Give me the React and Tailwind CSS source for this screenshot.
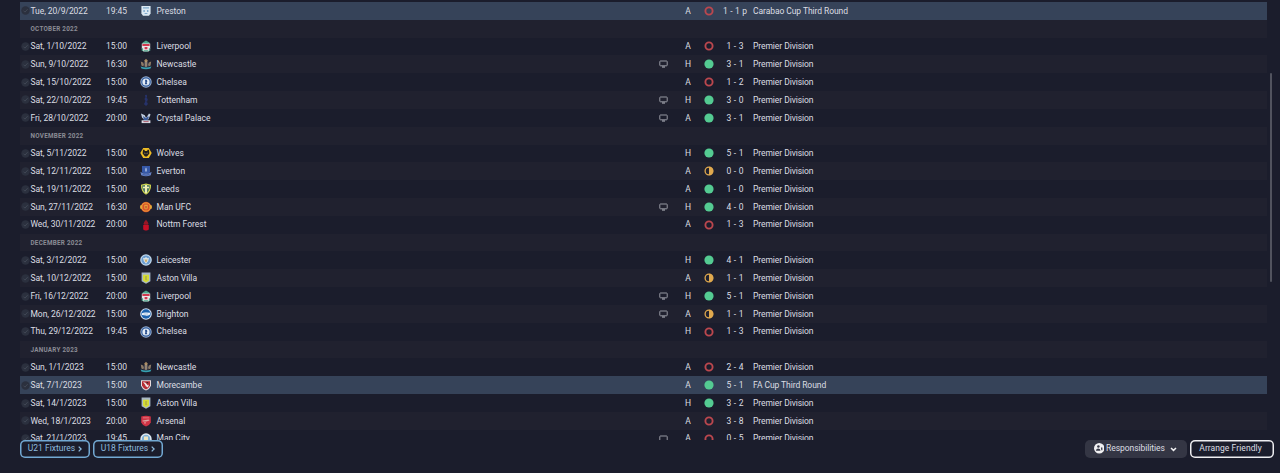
import React from "react";
import clsx from "clsx";

const ROWS = [
  { date: "Tue, 20/9/2022", time: "19:45", team: "Preston", venue: "A", result: "L", score: "1 - 1 p", comp: "Carabao Cup Third Round", cup: true },
  { month: "OCTOBER 2022" },
  { date: "Sat, 1/10/2022", time: "15:00", team: "Liverpool", venue: "A", result: "L", score: "1 - 3" },
  { date: "Sun, 9/10/2022", time: "16:30", team: "Newcastle", tv: true, venue: "H", result: "W", score: "3 - 1" },
  { date: "Sat, 15/10/2022", time: "15:00", team: "Chelsea", venue: "A", result: "L", score: "1 - 2" },
  { date: "Sat, 22/10/2022", time: "19:45", team: "Tottenham", tv: true, venue: "H", result: "W", score: "3 - 0" },
  { date: "Fri, 28/10/2022", time: "20:00", team: "Crystal Palace", tv: true, venue: "A", result: "W", score: "3 - 1" },
  { month: "NOVEMBER 2022" },
  { date: "Sat, 5/11/2022", time: "15:00", team: "Wolves", venue: "H", result: "W", score: "5 - 1" },
  { date: "Sat, 12/11/2022", time: "15:00", team: "Everton", venue: "A", result: "D", score: "0 - 0" },
  { date: "Sat, 19/11/2022", time: "15:00", team: "Leeds", venue: "A", result: "W", score: "1 - 0" },
  { date: "Sun, 27/11/2022", time: "16:30", team: "Man UFC", tv: true, venue: "H", result: "W", score: "4 - 0" },
  { date: "Wed, 30/11/2022", time: "20:00", team: "Nottm Forest", venue: "A", result: "L", score: "1 - 3" },
  { month: "DECEMBER 2022" },
  { date: "Sat, 3/12/2022", time: "15:00", team: "Leicester", venue: "H", result: "W", score: "4 - 1" },
  { date: "Sat, 10/12/2022", time: "15:00", team: "Aston Villa", venue: "A", result: "D", score: "1 - 1" },
  { date: "Fri, 16/12/2022", time: "20:00", team: "Liverpool", tv: true, venue: "H", result: "W", score: "5 - 1" },
  { date: "Mon, 26/12/2022", time: "15:00", team: "Brighton", tv: true, venue: "A", result: "D", score: "1 - 1" },
  { date: "Thu, 29/12/2022", time: "19:45", team: "Chelsea", venue: "H", result: "L", score: "1 - 3" },
  { month: "JANUARY 2023" },
  { date: "Sun, 1/1/2023", time: "15:00", team: "Newcastle", venue: "A", result: "L", score: "2 - 4" },
  { date: "Sat, 7/1/2023", time: "15:00", team: "Morecambe", venue: "A", result: "W", score: "5 - 1", comp: "FA Cup Third Round", cup: true },
  { date: "Sat, 14/1/2023", time: "15:00", team: "Aston Villa", venue: "H", result: "W", score: "3 - 2" },
  { date: "Wed, 18/1/2023", time: "20:00", team: "Arsenal", venue: "A", result: "L", score: "3 - 8" },
  { date: "Sat, 21/1/2023", time: "19:45", team: "Man City", tv: true, venue: "A", result: "L", score: "0 - 5" },
];

// all crests share a 12x12 viewBox
const CRESTS = {
  Preston: (
    <>
      <path d="M1.4 1h9.200v7.600L9 10.800H3L1.400 8.600z" fill="#dbe8f2" />
      <path d="M3 2.200h6v1.200H3zM3.400 5h1.400v2H3.400zM7 5h1.400v2H7zM4.600 8h2.800v1H4.600z" fill="#7fa9cc" />
    </>
  ),
  Liverpool: (
    <>
      <path d="M2.600 2.600 6 .4l3.400 2.200v1.400H2.600z" fill="#4fa58c" />
      <path d="M1.800 3.600h8.400v5.400L8.600 11.400H3.400L1.800 9z" fill="#e9e4e6" />
      <path d="M2.400 4h7.200v1.900H2.400zM4.600 7h2.800v2.200H4.600z" fill="#cf3a4f" />
      <path d="M1.800 8.300h1.300v2.600H1.800zM8.900 8.300h1.300v2.600H8.900zM3.800 10.200h4.400v1.200H3.800z" fill="#4fa58c" />
    </>
  ),
  Newcastle: (
    <>
      <path d="M4.600 2.200 6 .8l1.400 1.400V4H4.600z" fill="#a98b62" />
      <path d="m.8 3.600 2.400.8.8 2-.6 2.200-2-1zM11.200 3.600l-2.400.8-.8 2 .6 2.200 2-1z" fill="#8c7a66" />
      <path d="M3.900 4h4.200v4.200L6 9.600 3.900 8.200z" fill="#4d4a52" />
      <path d="M5.400 3.600h1.200v5.200H5.400z" fill="#c5ad8c" />
      <path d="M.6 8.600Q6 10.400 11.400 8.600l-.9 2Q6 12 1.500 10.600z" fill="#37a0b0" />
    </>
  ),
  Chelsea: (
    <>
      <circle cx="6" cy="6" r="5.700" fill="#9fb5d6" />
      <circle cx="6" cy="6" r="4.800" fill="#35609f" />
      <circle cx="6" cy="6" r="3.600" fill="#e3ebf5" />
      <path d="M5 3.800h1.700l.7 1.400-.7 1 .6 2H4.800l.5-2z" fill="#2b5191" />
    </>
  ),
  Tottenham: (
    <path d="M5 1 6.800.8l.3 1.900-.6 1 1.300 1.400-.6 2.300h-.8l.3.900a1.700 1.700 0 1 1-1.800.2l.5-1.800-1-1.600 1-1.700z" fill="#26326a" />
  ),
  "Crystal Palace": (
    <>
      <path d="m1 1.400 3.800 1.800L6 6l3-4.400 1.600.8-2.300 5H4L2 5.400z" fill="#c4cfdf" />
      <path d="m3 4 3 2.200L8 4l.8 1.400L7 8.400H4z" fill="#3b5c9c" />
      <path d="M1.600 8.300h8.800v2.800H1.600z" fill="#d7dce6" />
      <path d="M3.400 9.300h5.200v.8H3.400z" fill="#a43b4e" />
    </>
  ),
  Wolves: (
    <>
      <path d="M3.200 1h5.600l2.900 5-2.900 5H3.200L.3 6z" fill="#efbd25" />
      <path d="m3 3 1.100-.6.9 1.500h2l.9-1.500L9 3l.4 3.400L7 9.400H5L2.600 6.400z" fill="#231f20" />
      <path d="m3.900 5.600 1.500.7-.3.800zM8.100 5.600l-1.500.7.3.8z" fill="#f4d66d" />
    </>
  ),
  Everton: (
    <>
      <path d="M2 1h8v6.600L6 9.600 2 7.600z" fill="#3658a7" />
      <path d="m5 3.400 1-1 1 1v3.200H5z" fill="#90a6d4" />
      <path d="m.4 6.800 2 1.200Q6 9.400 9.600 8l2-1.200-.8 3.400Q6 12.500 1.200 10.200z" fill="#6884c6" />
      <path d="M2.700 9.600q3.300 1.200 6.600 0" stroke="#304b92" strokeWidth=".7" fill="none" />
    </>
  ),
  Leeds: (
    <>
      <path d="M1 1.700 6 .4l5 1.300c.2 4.700-1.500 8-5 10.100C2.500 9.700.8 6.400 1 1.700z" fill="#d3d84d" />
      <path d="M2.100 2.500 6 1.700l3.900.8C9.800 6.400 8.500 8.800 6 10.400 3.500 8.800 2.200 6.400 2.100 2.500z" fill="#547c69" />
      <path d="M5 2h2v7.800l-1 .7-1-.7zM3 3.800h6v1.400H3z" fill="#eff0b4" />
    </>
  ),
  "Man UFC": (
    <>
      <circle cx="6" cy="6" r="5.200" fill="#d8502a" />
      <path d="M.1 4.500 2 4v4L.1 7.500zM11.900 4.500 10 4v4l1.900-.5z" fill="#e3a63a" />
      <circle cx="6" cy="6" r="4.100" fill="none" stroke="#e9a738" strokeWidth=".9" />
      <path d="M4.400 3.800h3.200v3.600L6 8.600 4.400 7.400z" fill="#f0b040" />
      <path d="M5.500 4.800h1v2.600h-1z" fill="#9c2820" />
    </>
  ),
  "Nottm Forest": (
    <>
      <path d="m6 .6 1.300 2 .8.400-.2 1 .8.700-.7 1H4l-.7-1 .8-.7-.2-1 .8-.4z" fill="#991626" />
      <path d="M3.200 6h5.600v4.400Q7 11.900 6 11.400q-1 .5-2.800-1z" fill="#c70f26" />
    </>
  ),
  Leicester: (
    <>
      <circle cx="6" cy="6" r="5.800" fill="#c3d8ec" />
      <circle cx="6" cy="6" r="4.600" fill="#6b9dd0" />
      <path d="m3 3.700 1.500.5L6 2.900l1.500 1.300L9 3.700 8.200 7 6 9.700 3.800 7z" fill="#dbe5ea" />
      <path d="m4.600 5 1.400.8L7.400 5 7 7.300 6 8.400 5 7.300z" fill="#cfae6b" />
    </>
  ),
  "Aston Villa": (
    <>
      <path d="M1.600.6h8.800v8.600L6 11.700 1.600 9.200z" fill="#a9b8c6" />
      <path d="M3 2.800h6v5.800L6 10.600 3 8.600z" fill="#d5dc35" />
      <path d="M5 4.200 7.200 4l-.4 2 .6 2.300H5.200z" fill="#b6b640" />
    </>
  ),
  Brighton: (
    <>
      <circle cx="6" cy="6" r="5.800" fill="#cfe0f3" />
      <circle cx="6" cy="6" r="4.700" fill="#1c62ae" />
      <path d="M2 5.200q2-1 4.500-.6l3.500.2v1.600q-2 1.400-4 1.200T2 7z" fill="#f2f6fa" />
      <path d="M3.600 6h4.600" stroke="#5d8cc4" strokeWidth=".5" />
    </>
  ),
  Morecambe: (
    <>
      <path d="M1 1.200h10v5.500q-1.300 3.600-5 4.800-3.700-1.200-5-4.800z" fill="#e8dcde" />
      <path d="M2 2.200h8v4.300Q8.900 9.300 6 10.400 3.100 9.300 2 6.500z" fill="#b72d34" />
      <path d="m3 3 2.500.8 2.200 2.400 1.200-.6L8 8.500 5.800 7.200 5 5.600z" fill="#f0eaea" />
      <path d="M6.200 3h2.200l-1 1.600z" fill="#3b2428" />
    </>
  ),
  Arsenal: (
    <>
      <path d="M1.200 1.500Q6 0 10.800 1.500V7.400Q9.600 10.200 6 11.600 2.400 10.200 1.200 7.400z" fill="#cf3345" />
      <path d="M2.500 5.400 8.600 4.600l.9.900-3 1H2.600z" fill="#d9a6a3" />
      <path d="M3 2.600h6v.7H3zM4 7.200h2v1.200H4z" fill="#e58a8d" />
    </>
  ),
  "Man City": (
    <>
      <circle cx="6" cy="6" r="5.700" fill="#dfe9f1" />
      <circle cx="6" cy="6" r="4.200" fill="#7fb2d8" />
      <path d="M4 3.400h4V7L6 8.800 4 7z" fill="#efe6c0" />
    </>
  ),
};

function Crest({ team }) {
  return <svg viewBox="0 0 12 12" className="size-[12px] shrink-0">{CRESTS[team]}</svg>;
}

function CheckMark() {
  return (
    <svg viewBox="0 0 10 10" className="size-[9px] shrink-0">
      <circle cx="5" cy="5" r="4.700" fill="#2b303e" />
      <path d="M2.800 5.200 4.400 6.800 7.400 3.500" fill="none" stroke="#434957" strokeWidth="1" />
    </svg>
  );
}

function TvIcon() {
  return (
    <svg viewBox="0 0 9 8" className="w-[9px] h-[8px]" fill="none" stroke="#a5a7b0">
      <rect x=".8" y="1" width="7.400" height="4.800" rx=".6" strokeWidth=".9" />
      <path d="M3 7h3" strokeWidth="1.200" />
    </svg>
  );
}

function Result({ type }) {
  return (
    <svg viewBox="0 0 10 10" className="size-[10px]">
      {type === "W" && <circle cx="5" cy="5" r="4.600" fill="#54cb92" />}
      {type === "L" && <circle cx="5" cy="5" r="3.600" fill="none" stroke="#bb474e" strokeWidth="1.900" />}
      {type === "D" && (
        <>
          <circle cx="5" cy="5" r="3.900" fill="none" stroke="#e0a94e" strokeWidth="1.300" />
          <path d="M5 .8a4.200 4.200 0 0 1 0 8.400z" fill="#e0a94e" />
        </>
      )}
    </svg>
  );
}

function FixtureRow({ row, striped }) {
  if (row.month) {
    return (
      <div className="h-[17.83px] shrink-0 flex items-center pl-[10.500px] pt-[1px] bg-[#20212f] text-[6.300px] font-bold tracking-[0.27px] text-[#8b8c95]">
        {row.month}
      </div>
    );
  }
  return (
    <div className={clsx("h-[17.83px] shrink-0 flex items-center", row.cup ? "bg-[#364359]" : striped ? "bg-[#20212f]" : "bg-[#1b1d2c]")}>
      <div className="w-[10.500px] pl-[0.500px] flex"><CheckMark /></div>
      <div className="w-[70.500px] tracking-[-0.060px]">{row.date}</div>
      <div className="w-[31px] text-center">{row.time}</div>
      <div className="w-[24.500px] pl-[8px]"><Crest team={row.team} /></div>
      <div className="w-[502.500px]">{row.team}</div>
      <div className="w-[19px]">{row.tv && <TvIcon />}</div>
      <div className="w-[20px] text-center">{row.venue}</div>
      <div className="w-[21px] flex justify-center"><Result type={row.result} /></div>
      <div className="w-[34px] pr-[2px] text-center [word-spacing:0.4px]">{row.score}</div>
      <div className="tracking-[-0.070px]">{row.comp || "Premier Division"}</div>
    </div>
  );
}

function FixtureLink({ children }) {
  return (
    <button className="h-[18px] w-[70px] flex items-center justify-center gap-[3px] rounded-[5px] shadow-[inset_0_0_0_1.500px_#73a9d3] text-[#8dbade]">
      <span>{children}</span>
      <svg viewBox="0 0 4 6" className="w-[4px] h-[6px]" fill="none" stroke="currentColor" strokeWidth="1.300"><path d="m.7.6 2.400 2.400L.7 5.400" /></svg>
    </button>
  );
}

export default function App() {
  return (
    <div className="w-[1280px] h-[473px] overflow-hidden flex flex-col bg-[#1b1d2c] font-[Roboto,sans-serif] text-[8.500px] leading-none whitespace-nowrap text-[#dcdee3]">
      <div className="h-[439.500px] shrink-0 flex overflow-hidden pl-[20px] pt-[1.900px]">
        <div className="w-[1247px] flex flex-col">
          {ROWS.map((row, i) => <FixtureRow key={i} row={row} striped={i % 2 === 1} />)}
        </div>
        <div className="ml-[3px] mt-[71px] w-[2px] h-[209px] rounded-full bg-[#51535e]" />
      </div>

      <div className="flex items-center pl-[20px] pr-[6px]">
        <div className="flex gap-[3px]">
          <FixtureLink>U21 Fixtures</FixtureLink>
          <FixtureLink>U18 Fixtures</FixtureLink>
        </div>
        <div className="ml-auto flex gap-[3px]">
          <button className="w-[102px] h-[18px] flex items-center pl-[8.500px] rounded-[5px] bg-[#343644]">
            <svg viewBox="0 0 10 10" className="size-[10.500px] mr-[2px]">
              <circle cx="5" cy="5" r="5" fill="#f1f1f3" />
              <circle cx="4.200" cy="3.400" r="1.200" fill="#343644" />
              <path d="M1.800 7.400q.3-2.200 2.200-2.200t2.200 2.200zM6.600 4.200h1.400v2.800H7z" fill="#343644" />
            </svg>
            <span className="tracking-[-0.050px]">Responsibilities</span>
            <svg viewBox="0 0 7 5" className="w-[7px] h-[5px] ml-[5px] mt-[2px]" fill="none" stroke="#f0f0f2" strokeWidth="1.500"><path d="m1 1 2.500 2.400L6 1" /></svg>
          </button>
          <button className="w-[84px] h-[18px] pr-[3px] rounded-[5px] shadow-[inset_0_0_0_1.500px_#eeeef1] tracking-[0.060px]">Arrange Friendly</button>
        </div>
      </div>
    </div>
  );
}
